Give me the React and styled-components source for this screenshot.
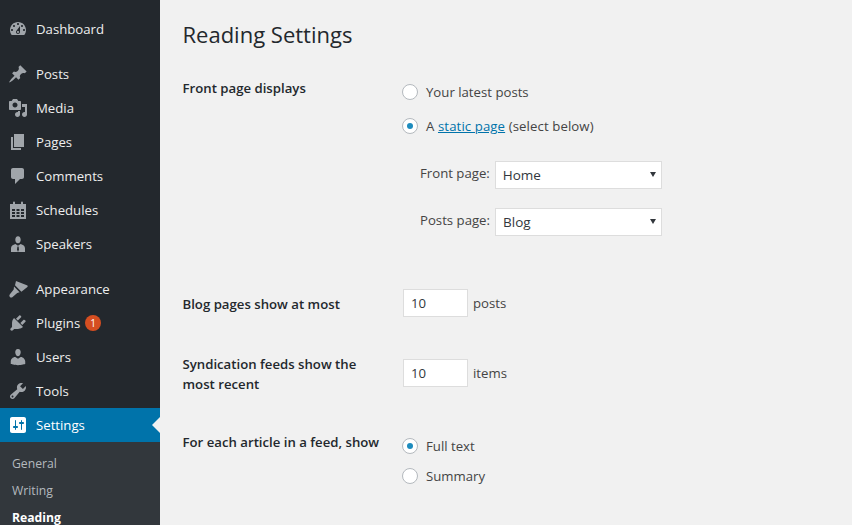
import styled, { createGlobalStyle } from 'styled-components';

const GlobalStyle = createGlobalStyle`
  html, body {
    margin: 0;
    height: 100%;
    overflow: hidden;
    background: #f1f1f1;
  }
  body {
    font-family: "Open Sans", "Noto Sans", sans-serif;
    font-size: 13.2px;
    color: #444;
  }
`;

const Layout = styled.div`
  display: flex;
  height: 525px;
  overflow: hidden;
`;

const Sidebar = styled.nav`
  width: 160px;
  flex-shrink: 0;
  padding-top: 12px;
  background: #23282d;
  overflow: hidden;
`;

const MenuRow = styled.a`
  position: relative;
  display: flex;
  align-items: center;
  height: 34px;
  padding-left: 8px;
  margin-bottom: ${props => (props.$gap ? '11px' : '0')};
  color: ${props => (props.$active ? '#fff' : '#eee')};
  background: ${props => (props.$active ? '#0073aa' : 'transparent')};

  svg {
    width: 20px;
    height: 20px;
    fill: ${props => (props.$active ? '#fff' : '#a0a5aa')};
    fill-rule: evenodd;
    flex-shrink: 0;
  }

  ${props => props.$active && `
    &::after {
      content: '';
      position: absolute;
      right: 0;
      top: 9px;
      border: 8px solid transparent;
      border-right-color: #f1f1f1;
      border-left-width: 0;
    }
  `}
`;

const MenuLabel = styled.span`
  margin-left: 8px;
  font-size: 13.2px;
`;

const Badge = styled.span`
  width: 16px;
  height: 16px;
  margin-left: 5px;
  border-radius: 50%;
  background: #d54e21;
  color: #fff;
  font-size: 10px;
  line-height: 16px;
  text-align: center;
`;

const SubMenu = styled.div`
  padding-top: 8px;
  background: #32373c;
  height: 90px;
`;

const SubItem = styled.a`
  display: block;
  height: 27px;
  padding-left: 12px;
  line-height: 27px;
  font-size: 12.2px;
  color: ${props => (props.$current ? '#fff' : '#b4b9be')};
  font-weight: ${props => (props.$current ? 700 : 400)};
`;

const Main = styled.main`
  flex: 1;
  padding: 19px 0 0 22.5px;
`;

const Title = styled.h1`
  margin: 0 0 26px;
  height: 30px;
  font-size: 22px;
  font-weight: 400;
  line-height: 30px;
  color: #23282d;
`;

const FormRow = styled.div`
  display: grid;
  grid-template-columns: 220.5px 1fr;
  margin-bottom: ${props => props.$after || 0}px;
`;

const RowLabel = styled.div`
  width: 203px;
  font-size: 13.2px;
  font-weight: 600;
  line-height: 20px;
  color: #23282d;
  padding-top: ${props => props.$top || 0}px;
`;

const ChoiceGroup = styled.div`
  padding-top: ${props => props.$top || 0}px;
`;

const Choice = styled.label`
  display: flex;
  align-items: center;
  height: 20px;
  margin-bottom: ${props => props.$after || 14}px;
  gap: 7px;
`;

const ChoiceText = styled.span`
  letter-spacing: 0.1px;
`;

const Radio = styled.span`
  display: flex;
  align-items: center;
  justify-content: center;
  box-sizing: border-box;
  width: 16px;
  height: 16px;
  margin-left: -1px;
  margin-right: 1px;
  border: 1px solid #b4b9be;
  border-radius: 50%;
  background: #fff;

  &::before {
    content: '';
    display: ${props => (props.$checked ? 'block' : 'none')};
    width: 6px;
    height: 6px;
    border-radius: 50%;
    background: #1e8cbe;
  }
`;

const TextLink = styled.a`
  color: #0073aa;
  text-decoration: underline;
`;

const PageRow = styled.div`
  display: flex;
  align-items: flex-start;
  height: 28px;
  margin-left: 17px;
  gap: 5px;
  margin-bottom: 19px;
`;

const PageLabel = styled.span`
  line-height: 24px;
`;

const SelectWrap = styled.div`
  position: relative;
  width: 167px;
  height: 28px;

  &::after {
    content: '';
    position: absolute;
    right: 6px;
    top: 11px;
    border-style: solid;
    border-width: 5px 3px 0;
    border-color: #32373c transparent transparent;
  }
`;

const Select = styled.select`
  appearance: none;
  box-sizing: border-box;
  width: 100%;
  height: 100%;
  padding: 0 7px;
  border: 1px solid #ddd;
  border-radius: 0;
  background: #fff;
  color: #32373c;
  font: inherit;
  font-size: 13.5px;
`;

const InlineField = styled.div`
  display: flex;
  align-items: center;
  align-self: start;
  gap: 5px;
  padding-top: ${props => props.$top || 0}px;
`;

const NumberInput = styled.input`
  box-sizing: border-box;
  width: 65px;
  height: 28px;
  padding: 0 7px;
  border: 1px solid #ddd;
  background: #fff;
  color: #32373c;
  font: inherit;
`;

const Icons = {
  dashboard: 'M3.76 16h12.48c1.1-1.37 1.76-3.11 1.76-5 0-4.42-3.58-8-8-8s-8 3.58-8 8c0 1.89.66 3.63 1.76 5zM10 4c.55 0 1 .45 1 1s-.45 1-1 1-1-.45-1-1 .45-1 1-1zM6 6c.55 0 1 .45 1 1s-.45 1-1 1-1-.45-1-1 .45-1 1-1zm8 0c.55 0 1 .45 1 1s-.45 1-1 1-1-.45-1-1 .45-1 1-1zm-5.37 5.55L12 7v6c0 1.1-.9 2-2 2s-2-.9-2-2c0-.57.24-1.08.63-1.45zM4 10c.55 0 1 .45 1 1s-.45 1-1 1-1-.45-1-1 .45-1 1-1zm12 0c.55 0 1 .45 1 1s-.45 1-1 1-1-.45-1-1 .45-1 1-1zm-5 3c0-.55-.45-1-1-1s-1 .45-1 1 .45 1 1 1 1-.45 1-1z',
  pin: 'M10.44 3.02l1.82-1.82 6.36 6.35-1.83 1.82c-1.05-.68-2.48-.57-3.41.36l-.75.75c-.92.93-1.04 2.35-.35 3.41l-1.83 1.82-2.41-2.41-2.8 2.79c-.42.42-3.38 2.71-3.8 2.29s1.86-3.39 2.28-3.81l2.79-2.79L4.1 9.36l1.83-1.82c1.05.69 2.48.57 3.41-.36l.75-.75c.93-.92 1.05-2.35.35-3.41z',
  media: 'M13 11V4c0-.55-.45-1-1-1h-1.67L9 1H5L3.67 3H2c-.55 0-1 .45-1 1v7c0 .55.45 1 1 1h10c.55 0 1-.45 1-1zM7 4.5c1.38 0 2.5 1.12 2.5 2.5S8.38 9.5 7 9.5 4.5 8.38 4.5 7 5.62 4.5 7 4.5zM14 6h5v10.5c0 1.38-1.12 2.5-2.5 2.5S14 17.88 14 16.5s1.12-2.5 2.5-2.5c.17 0 .34.02.5.05V9h-3V6zm-4 8.05V13h2v3.5c0 1.38-1.12 2.5-2.5 2.5S7 17.88 7 16.5 8.12 14 9.5 14c.17 0 .34.02.5.05z',
  page: 'M6 15V2h10v13H6zm-1 1h8v2H3V5h2v11z',
  comment: 'M5 2h9c1.1 0 2 .9 2 2v7c0 1.1-.9 2-2 2h-2l-5 5v-5H5c-1.1 0-2-.9-2-2V4c0-1.1.9-2 2-2z',
  calendar: 'M5 4V2.500a1 1 0 0 1 2 0V4h6V2.500a1 1 0 0 1 2 0V4h3v15H2V4zM4 9v2h3V9zm4.500 0v2h3V9zM13 9v2h3V9zM4 12v2h3v-2zm4.500 0v2h3v-2zm4.500 0v2h3v-2zM4 15v2h3v-2zm4.500 0v2h3v-2zm4.500 0v2h3v-2z',
  speaker: 'M10 9.300c-1.700 0-2.700-1.800-2.700-3.600C7.300 3.900 8.300 2.200 10 2.200s2.700 1.700 2.700 3.500c0 1.800-1 3.600-2.700 3.600zM7.400 10L10 11.800 12.600 10c2.500.6 4.400 2.200 4.400 4.300V18H3v-3.700c0-2.100 1.900-3.700 4.400-4.300zM9.400 12.500l-.4 3 1 2.500 1-2.500-.4-3z',
  brush: 'M8 2l11.500 4.500.2 1.300-6.300 5L7 6.300zM6 7.500l5.600 5.800-2.400.8-4.600 3.800c-.8.8-2 .8-2.700 0s-.7-1.900 0-2.700l3.800-4.600z',
  plugin: 'M13.11 4.36L9.87 7.6 8 5.730l3.240-3.240c.35-.34 1.050-.2 1.560.32.52.51.66 1.210.31 1.550zm-8 1.770l.91-1.120 9.010 9.010-1.190.84c-.71.71-2.630 1.160-3.820 1.160H6.140L4.900 17.260c-.59.59-1.540.59-2.120 0-.59-.58-.59-1.530 0-2.120l1.240-1.240v-3.880c0-1.130.4-3.190 1.090-3.890zm7.260 3.970l3.240-3.240c.34-.35 1.040-.21 1.550.31.52.51.66 1.210.31 1.550l-3.240 3.250z',
  user: 'M10 9.250c-2.270 0-2.730-3.440-2.730-3.440C7 4.020 7.820 2 9.970 2c2.160 0 2.980 2.020 2.710 3.810 0 0-.41 3.440-2.680 3.440zm0 2.570L12.720 10c2.390 0 4.520 2.330 4.520 4.530v2.490s-3.650 1.130-7.240 1.130c-3.650 0-7.240-1.130-7.240-1.130v-2.490c0-2.250 1.940-4.480 4.470-4.480z',
  wrench: 'M16.680 9.770c-1.340 1.340-3.300 1.670-4.950.99l-5.410 6.520c-.99.99-2.590.99-3.580 0s-.99-2.590 0-3.570l6.520-5.420c-.68-1.650-.35-3.610.99-4.950 1.280-1.280 3.120-1.620 4.720-1.060l-2.890 2.890 2.820 2.820 2.860-2.870c.53 1.580.18 3.390-1.080 4.650zM3.810 16.210c.4.39 1.040.39 1.430 0 .4-.4.4-1.040 0-1.430-.39-.4-1.030-.4-1.430 0-.39.39-.39 1.030 0 1.430z',
  settings: 'M18 16V4c0-1.100-.9-2-2-2H4c-1.100 0-2 .9-2 2v12c0 1.100.9 2 2 2h12c1.100 0 2-.9 2-2zM8 11h1c.55 0 1 .45 1 1s-.45 1-1 1H8v1.500c0 .28-.22.5-.5.5s-.5-.22-.5-.5V13H6c-.55 0-1-.45-1-1s.45-1 1-1h1V5.500c0-.28.22-.5.5-.5s.5.22.5.5V11zm5-2h-1c-.55 0-1-.45-1-1s.45-1 1-1h1V5.500c0-.28.22-.5.5-.5s.5.22.5.5V7h1c.55 0 1 .45 1 1s-.45 1-1 1h-1v5.500c0 .28-.22.5-.5.5s-.5-.22-.5-.5V9z',
};

const menu = [
  { label: 'Dashboard', icon: 'dashboard', gap: true },
  { label: 'Posts', icon: 'pin' },
  { label: 'Media', icon: 'media' },
  { label: 'Pages', icon: 'page' },
  { label: 'Comments', icon: 'comment' },
  { label: 'Schedules', icon: 'calendar' },
  { label: 'Speakers', icon: 'speaker', gap: true },
  { label: 'Appearance', icon: 'brush' },
  { label: 'Plugins', icon: 'plugin', badge: 1 },
  { label: 'Users', icon: 'user' },
  { label: 'Tools', icon: 'wrench' },
  { label: 'Settings', icon: 'settings', active: true },
];

const App = () => (
  <Layout>
    <GlobalStyle />
    <Sidebar>
      {menu.map(item => (
        <MenuRow key={item.label} $gap={item.gap} $active={item.active}>
          <svg viewBox="0 0 20 20"><path d={Icons[item.icon]} /></svg>
          <MenuLabel>{item.label}</MenuLabel>
          {item.badge && <Badge>{item.badge}</Badge>}
        </MenuRow>
      ))}
      <SubMenu>
        <SubItem>General</SubItem>
        <SubItem>Writing</SubItem>
        <SubItem $current>Reading</SubItem>
      </SubMenu>
    </Sidebar>
    <Main>
      <Title>Reading Settings</Title>
      <FormRow $after={34}>
        <RowLabel $top={3}>Front page displays</RowLabel>
        <ChoiceGroup $top={7}>
          <Choice><Radio />Your latest posts</Choice>
          <Choice $after={25}><Radio $checked /><ChoiceText>A <TextLink>static page</TextLink> (select below)</ChoiceText></Choice>
          <PageRow>
            <PageLabel>Front page:</PageLabel>
            <SelectWrap><Select defaultValue="Home"><option>Home</option></Select></SelectWrap>
          </PageRow>
          <PageRow>
            <PageLabel>Posts page:</PageLabel>
            <SelectWrap><Select defaultValue="Blog"><option>Blog</option></Select></SelectWrap>
          </PageRow>
        </ChoiceGroup>
      </FormRow>
      <FormRow $after={37}>
        <RowLabel $top={5}>Blog pages show at most</RowLabel>
        <InlineField><NumberInput defaultValue="10" />posts</InlineField>
      </FormRow>
      <FormRow $after={38}>
        <RowLabel>Syndication feeds show the most recent</RowLabel>
        <InlineField $top={5}><NumberInput defaultValue="10" />items</InlineField>
      </FormRow>
      <FormRow>
        <RowLabel>For each article in a feed, show</RowLabel>
        <ChoiceGroup $top={4}>
          <Choice $after={10}><Radio $checked />Full text</Choice>
          <Choice><Radio />Summary</Choice>
        </ChoiceGroup>
      </FormRow>
    </Main>
  </Layout>
);

export default App;
